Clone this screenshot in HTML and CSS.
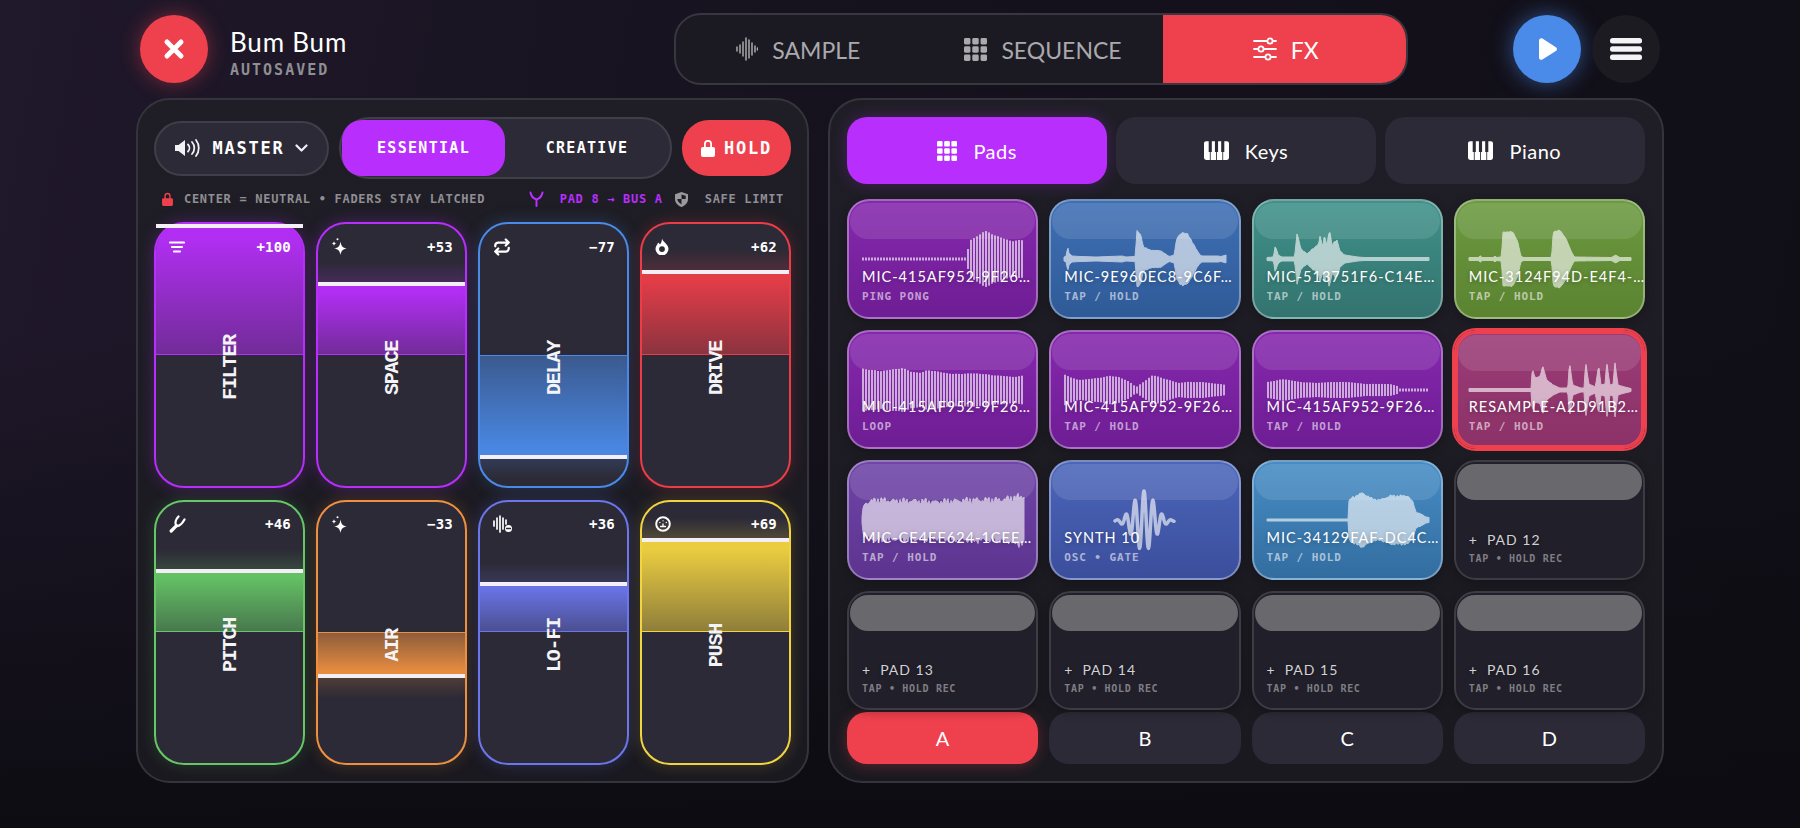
FILE: index.html
```html
<!DOCTYPE html>
<html lang="en">
<head>
  <meta charset="UTF-8">
  <title>Bum Bum - FX</title>
  <link rel="stylesheet" href="styles.css">
</head>
<body>
  <svg class="defs" width="0" height="0" aria-hidden="true">
    <symbol id="i-grid" viewBox="0 0 20 20">
      <rect x="0" y="0" width="5.6" height="5.6" rx="1.2"/><rect x="7.2" y="0" width="5.6" height="5.6" rx="1.2"/><rect x="14.4" y="0" width="5.6" height="5.6" rx="1.2"/>
      <rect x="0" y="7.2" width="5.6" height="5.6" rx="1.2"/><rect x="7.2" y="7.2" width="5.6" height="5.6" rx="1.2"/><rect x="14.4" y="7.2" width="5.6" height="5.6" rx="1.2"/>
      <rect x="0" y="14.4" width="5.6" height="5.6" rx="1.2"/><rect x="7.2" y="14.4" width="5.6" height="5.6" rx="1.2"/><rect x="14.4" y="14.4" width="5.6" height="5.6" rx="1.2"/>
    </symbol>
    <symbol id="i-keys" viewBox="0 0 24 18">
      <path fill-rule="evenodd" d="M2 0h20a2 2 0 0 1 2 2v14a2 2 0 0 1-2 2H2a2 2 0 0 1-2-2V2a2 2 0 0 1 2-2ZM4.5 0v10.500h3V0Zm6 0v10.500h3V0Zm6 0v10.500h3V0ZM5.600 10.500V18h.8v-7.500Zm6 0V18h.8v-7.500Zm6 0V18h.8v-7.500Z"/>
    </symbol>
    <symbol id="i-spark" viewBox="0 0 16 17">
      <path d="M9.500 3.500C10.200 8 11.500 9.800 16 10.500 11.500 11.200 10.200 13 9.500 17 8.800 13 7.500 11.200 3 10.500 7.500 9.800 8.800 8 9.500 3.500Z"/>
      <path d="M3 3c.2 1.700.8 2.300 2.500 2.500C3.800 5.700 3.200 6.300 3 8c-.2-1.700-.8-2.300-2.500-2.500C2.200 5.300 2.800 4.700 3 3Z"/>
      <circle cx="6.500" cy="1.200" r="1"/>
    </symbol>
    <symbol id="i-lock" viewBox="0 0 14 18">
      <path d="M3 8V5a4 4 0 0 1 8 0v3h1.200A1.800 1.800 0 0 1 14 9.800v6.400a1.800 1.800 0 0 1-1.800 1.800H1.800A1.800 1.800 0 0 1 0 16.200V9.800A1.800 1.800 0 0 1 1.800 8Zm1.800 0h4.400V5a2.200 2.200 0 0 0-4.400 0Z"/>
    </symbol>
  </svg>

  <div class="app">
    <header class="topbar">
      <div class="brand">
        <button class="round close">
          <svg width="22" height="22" viewBox="0 0 22 22"><path d="M4 4l14 14M18 4L4 18" fill="none" stroke="#fff" stroke-width="5" stroke-linecap="round"/></svg>
        </button>
        <div class="brand-text">
          <div class="song">Bum Bum</div>
          <div class="saved">AUTOSAVED</div>
        </div>
      </div>

      <nav class="nav">
        <a class="nav-tab">
          <svg width="22" height="24" viewBox="0 0 22 24" fill="none" stroke="currentColor" stroke-width="1.500" stroke-linecap="round"><path d="M1 10v4M4 8v8M7 5v14M10 1v22M13 3v18M16 6v12M19 9v6M21.500 11v2"/></svg>
          <span>SAMPLE</span>
        </a>
        <a class="nav-tab">
          <svg class="fill-current" width="23" height="23"><use href="#i-grid"/></svg>
          <span>SEQUENCE</span>
        </a>
        <a class="nav-tab active">
          <svg width="24" height="24" viewBox="0 0 24 24" fill="none" stroke="#fff" stroke-width="1.800" stroke-linecap="round"><path d="M1 4h13M20 4h3M1 12h4M11 12h12M1 20h11M18 20h5"/><circle cx="17" cy="4" r="2.600"/><circle cx="8" cy="12" r="2.600"/><circle cx="15" cy="20" r="2.600"/></svg>
          <span>FX</span>
        </a>
      </nav>

      <div class="actions">
        <button class="round play">
          <svg width="24" height="26" viewBox="0 0 24 26"><path d="M4 4.500c0-1.800 1.900-2.900 3.400-2l13.500 8.700c1.400.9 1.400 2.900 0 3.700L7.400 23.500c-1.500.9-3.400-.2-3.400-2Z" fill="#fff"/></svg>
        </button>
        <button class="round menu">
          <svg width="32" height="22" viewBox="0 0 32 22" fill="#f4f3f6"><rect width="32" height="5.600" rx="2.500"/><rect y="8.200" width="32" height="5.600" rx="2.500"/><rect y="16.400" width="32" height="5.600" rx="2.500"/></svg>
        </button>
      </div>
    </header>

    <main class="panels">
      <section class="panel left">
        <div class="controls">
          <button class="master">
            <svg width="27" height="18" viewBox="0 0 27 18"><path d="M0 6h3.500L10 1v16l-6.500-5H0Z" fill="#f1f0f4"/><path d="M13 5.500a5 5 0 0 1 0 7M17 3a9 9 0 0 1 0 12M21 1a13 13 0 0 1 0 16" fill="none" stroke="#f1f0f4" stroke-width="1.800" stroke-linecap="round"/></svg>
            MASTER
            <svg width="13" height="8" viewBox="0 0 13 8"><path d="M1.500 1.500l5 5 5-5" fill="none" stroke="#f1f0f4" stroke-width="2.200" stroke-linecap="round" stroke-linejoin="round"/></svg>
          </button>
          <div class="mode">
            <button class="mode-btn active">ESSENTIAL</button>
            <button class="mode-btn">CREATIVE</button>
          </div>
          <button class="hold">
            <svg class="fill-white" width="14" height="18"><use href="#i-lock"/></svg>
            HOLD
          </button>
        </div>

        <div class="hints">
          <span class="hint">
            <svg class="fill-red" width="11" height="14"><use href="#i-lock"/></svg>
            CENTER = NEUTRAL • FADERS STAY LATCHED
          </span>
          <span class="hint-right">
            <span class="hint route">
              <svg width="15" height="16" viewBox="0 0 15 16" fill="none" stroke="#b82efc" stroke-width="2" stroke-linecap="round" stroke-linejoin="round"><path d="M1.500 1.500C2 5 4.500 7.500 7.500 8.500 10.500 7.500 13 5 13.500 1.500M7.500 8.500V15"/></svg>
              PAD 8 → BUS A
            </span>
            <span class="hint limit">
              <svg width="13" height="15" viewBox="0 0 13 15"><path fill-rule="evenodd" d="M6.500 0L13 2.200V7c0 3.800-2.800 6.600-6.500 8C2.800 13.600 0 10.800 0 7V2.200ZM6.500 2.500V7H2.300c.2 2.300 2 4.100 4.200 5.200V7h4.200V3.800Z" fill="#9a999e"/></svg>
              SAFE LIMIT
            </span>
          </span>
        </div>

        <div class="faders">
          <div class="fader purple" style="--v:100">
            <div class="track"><div class="fill"></div></div>
            <div class="handle"></div>
            <div class="fader-top">
              <svg width="16" height="12" viewBox="0 0 16 12" fill="none" stroke="#fff" stroke-width="2.200" stroke-linecap="round"><path d="M1 1.500h14M3 6h10M5 10.500h6"/></svg>
              <span class="value">+100</span>
            </div>
            <span class="fader-name">FILTER</span>
          </div>
          <div class="fader purple" style="--v:53">
            <div class="track"><div class="fill"></div></div>
            <div class="handle"></div>
            <div class="fader-top">
              <svg class="fill-white" width="16" height="17"><use href="#i-spark"/></svg>
              <span class="value">+53</span>
            </div>
            <span class="fader-name">SPACE</span>
          </div>
          <div class="fader blue neg" style="--v:-77">
            <div class="track"><div class="fill"></div></div>
            <div class="handle"></div>
            <div class="fader-top">
              <svg width="18" height="18" viewBox="0 0 24 24" fill="none" stroke="#fff" stroke-width="3" stroke-linecap="round" stroke-linejoin="round"><path d="M17 2l4 4-4 4M3 11v-1a4 4 0 0 1 4-4h14M7 22l-4-4 4-4M21 13v1a4 4 0 0 1-4 4H3"/></svg>
              <span class="value">−77</span>
            </div>
            <span class="fader-name">DELAY</span>
          </div>
          <div class="fader red" style="--v:62">
            <div class="track"><div class="fill"></div></div>
            <div class="handle"></div>
            <div class="fader-top">
              <svg width="14" height="17" viewBox="0 0 14 17"><path fill-rule="evenodd" d="M7 .5c.8 3.500 6.500 5.500 6.500 10.500a6.300 6.300 0 0 1-13 0c0-3 2-4 2.500-6.500C4.300 5.300 5 6.500 5 6.500 6.200 5 7 3 7 .5ZM7 8.200a2.900 2.900 0 1 0 0 5.800 2.900 2.900 0 0 0 0-5.800Z" fill="#fff"/></svg>
              <span class="value">+62</span>
            </div>
            <span class="fader-name">DRIVE</span>
          </div>
          <div class="fader green" style="--v:46">
            <div class="track"><div class="fill"></div></div>
            <div class="handle"></div>
            <div class="fader-top">
              <svg width="17" height="18" viewBox="0 0 17 18" fill="none" stroke="#fff" stroke-linecap="round"><path d="M2.200 16l5.300-5.300" stroke-width="3.200"/><path d="M7.500 11C5.500 8 7 4 9.500 1.500M7.500 11c3 .5 6-3 8-6.500" stroke-width="2.300"/></svg>
              <span class="value">+46</span>
            </div>
            <span class="fader-name">PITCH</span>
          </div>
          <div class="fader orange neg" style="--v:-33">
            <div class="track"><div class="fill"></div></div>
            <div class="handle"></div>
            <div class="fader-top">
              <svg class="fill-white" width="16" height="17"><use href="#i-spark"/></svg>
              <span class="value">−33</span>
            </div>
            <span class="fader-name">AIR</span>
          </div>
          <div class="fader indigo" style="--v:36">
            <div class="track"><div class="fill"></div></div>
            <div class="handle"></div>
            <div class="fader-top">
              <svg width="20" height="18" viewBox="0 0 20 18" fill="none" stroke="#fff" stroke-width="1.700" stroke-linecap="round"><path d="M1 6v5M4 3v11M7 1v16M10 3v11M13 5v4"/><circle cx="15.500" cy="13.500" r="3.500" fill="#fff" stroke="none"/><path d="M13.500 13.500h4" stroke="#2c2a36" stroke-width="1.300"/></svg>
              <span class="value">+36</span>
            </div>
            <span class="fader-name">LO-FI</span>
          </div>
          <div class="fader yellow" style="--v:69">
            <div class="track"><div class="fill"></div></div>
            <div class="handle"></div>
            <div class="fader-top">
              <svg width="16" height="16" viewBox="0 0 16 16" fill="none" stroke="#fff"><circle cx="8" cy="8" r="6.800" stroke-width="2"/><path d="M4.800 6.500h.1M8 4.800h.1M11.200 6.500h.1M8 10.500V8M5.500 10.500h5" stroke-width="1.300" stroke-linecap="round"/></svg>
              <span class="value">+69</span>
            </div>
            <span class="fader-name">PUSH</span>
          </div>
        </div>
      </section>

      <section class="panel right">
        <div class="tabs">
          <button class="tab active"><svg class="fill-white" width="20" height="20"><use href="#i-grid"/></svg>Pads</button>
          <button class="tab"><svg class="fill-white" width="25" height="19"><use href="#i-keys"/></svg>Keys</button>
          <button class="tab"><svg class="fill-white" width="25" height="19"><use href="#i-keys"/></svg>Piano</button>
        </div>

        <div class="pads">
          <div class="pad p-purple">
            <svg class="wave" data-kind="bars" data-env="0:1.500 .63:1.500 .645:6 .655:18 .7:22 .75:28 .8:25 .86:21 .92:18 1:19"></svg>
            <div class="pad-name">MIC-415AF952-9F26…</div>
            <div class="pad-sub">PING PONG</div>
          </div>
          <div class="pad p-blue">
            <svg class="wave" data-kind="solid" data-env="0:2 .015:3 .022:13 .03:6 .05:3 .1:2.500 .2:2 .36:3 .38:2 .44:2.500 .45:28 .475:24 .49:12 .53:9 .6:8 .635:4 .65:2.500 .68:4 .695:20 .73:27 .76:25 .8:15 .83:6 .85:3 .95:3 .97:2.500 1:4" data-jitter=".06"></svg>
            <div class="pad-name">MIC-9E960EC8-9C6F…</div>
            <div class="pad-sub">TAP / HOLD</div>
          </div>
          <div class="pad p-teal">
            <svg class="wave" data-kind="solid" data-env="0:1.500 .04:2 .05:13 .07:4 .09:2 .17:2 .185:25 .21:10 .25:5 .28:10 .32:15 .325:23 .345:13 .355:25 .37:14 .385:29 .4:14 .43:20 .45:8 .48:4 .52:3 .56:2 .6:1.500 1:1.500" data-jitter=".1"></svg>
            <div class="pad-name">MIC-513751F6-C14E…</div>
            <div class="pad-sub">TAP / HOLD</div>
          </div>
          <div class="pad p-green">
            <svg class="wave" data-kind="solid" data-env="0:1.500 .06:1.500 .07:3.500 .08:1.500 .15:1.500 .16:3 .17:1.500 .2:2 .21:27 .27:27 .3:18 .32:3 .335:1.500 .51:1.500 .52:27 .56:29 .6:20 .63:8 .65:2 .88:1.500 .905:4 .93:1.500 1:1.500" data-jitter=".02"></svg>
            <div class="pad-name">MIC-3124F94D-E4F4-…</div>
            <div class="pad-sub">TAP / HOLD</div>
          </div>

          <div class="pad p-purple">
            <svg class="wave" data-kind="bars" data-env="0:21 .1:19 .2:21 .24:22 .3:18 .36:17 .4:20 .48:18 .56:16 .7:16.500 .8:15 .95:13 1:15"></svg>
            <div class="pad-name">MIC-415AF952-9F26…</div>
            <div class="pad-sub">LOOP</div>
          </div>
          <div class="pad p-purple">
            <svg class="wave" data-kind="bars" data-env="0:15 .08:10 .2:12 .28:14 .33:13 .4:8 .44:3 .5:10 .54:15 .6:12 .7:7 .75:8 .85:8 1:5"></svg>
            <div class="pad-name">MIC-415AF952-9F26…</div>
            <div class="pad-sub">TAP / HOLD</div>
          </div>
          <div class="pad p-purple">
            <svg class="wave" data-kind="bars" data-env="0:8 .1:11 .2:8 .3:7 .4:8 .5:8 .6:6 .75:6 .8:4 .81:1.500 1:1.500"></svg>
            <div class="pad-name">MIC-415AF952-9F26…</div>
            <div class="pad-sub">TAP / HOLD</div>
          </div>
          <div class="pad p-rose selected">
            <svg class="wave" data-kind="solid" data-env="0:1.500 .385:1.500 .39:21 .41:12 .44:14 .455:24 .48:10 .52:5 .56:2 .61:2 .62:28 .64:5 .69:2 .71:2 .72:28 .74:6 .78:3 .8:25 .815:5 .84:6 .85:28 .87:5 .89:6 .9:28 .92:5 .96:3 1:1.500" data-jitter=".03"></svg>
            <div class="pad-name">RESAMPLE-A2D91B2…</div>
            <div class="pad-sub">TAP / HOLD</div>
          </div>

          <div class="pad p-violet">
            <svg class="wave" data-kind="solid" data-env="0:3 .01:15 .05:19 .1:20 .2:19 .35:19 .45:18 .55:19 .7:20 .85:20 .97:23 1:24" data-jitter=".22"></svg>
            <div class="pad-name">MIC-CE4EE624-1CEE…</div>
            <div class="pad-sub">TAP / HOLD</div>
          </div>
          <div class="pad p-indigo">
            <svg class="wave" data-kind="sine"></svg>
            <div class="pad-name">SYNTH 10</div>
            <div class="pad-sub">OSC • GATE</div>
          </div>
          <div class="pad p-sky">
            <svg class="wave" data-kind="solid" data-env="0:1 .5:1 .505:18 .52:22 .59:27 .65:21 .7:20 .76:24 .87:24 .9:18 .92:8 .95:6 .98:3 1:2.500" data-jitter=".07"></svg>
            <div class="pad-name">MIC-34129FAF-DC4C…</div>
            <div class="pad-sub">TAP / HOLD</div>
          </div>
          <div class="pad empty">
            <div class="pad-name"><span class="plus">+</span>PAD 12</div>
            <div class="pad-sub">TAP • HOLD REC</div>
          </div>

          <div class="pad empty">
            <div class="pad-name"><span class="plus">+</span>PAD 13</div>
            <div class="pad-sub">TAP • HOLD REC</div>
          </div>
          <div class="pad empty">
            <div class="pad-name"><span class="plus">+</span>PAD 14</div>
            <div class="pad-sub">TAP • HOLD REC</div>
          </div>
          <div class="pad empty">
            <div class="pad-name"><span class="plus">+</span>PAD 15</div>
            <div class="pad-sub">TAP • HOLD REC</div>
          </div>
          <div class="pad empty">
            <div class="pad-name"><span class="plus">+</span>PAD 16</div>
            <div class="pad-sub">TAP • HOLD REC</div>
          </div>
        </div>

        <div class="banks">
          <button class="bank active">A</button>
          <button class="bank">B</button>
          <button class="bank">C</button>
          <button class="bank">D</button>
        </div>
      </section>
    </main>
  </div>

  <script src="script.js"></script>
</body>
</html>
```

FILE: styles.css
```css
* {
  box-sizing: border-box;
}

body {
  margin: 0;
  height: 828px;
  overflow: hidden;
  font-family: 'Lato', sans-serif;
  color: #fff;
  background:
    linear-gradient(to bottom, rgba(13,12,18,0) 40%, #0d0c12 100%),
    linear-gradient(100deg, #20182b 0%, #15121d 45%, #100e17 100%);
}

button {
  border: none;
  color: inherit;
  font: inherit;
  padding: 0;
}

.defs {
  position: absolute;
}

.fill-current {
  fill: currentColor;
}

.fill-white {
  fill: #fff;
}

.fill-red {
  fill: #ee414d;
}

.app {
  width: 1528px;
  margin: 0 auto;
  padding-top: 13px;
}

/* top bar */
.topbar {
  display: grid;
  grid-template-columns: 534px 734px 1fr;
  align-items: center;
  height: 72px;
  padding: 0 4px;
}

.brand {
  display: flex;
  align-items: center;
  gap: 22px;
}

.brand-text {
  padding-top: 7px;
}

.round {
  width: 68px;
  height: 68px;
  border-radius: 50%;
  display: flex;
  align-items: center;
  justify-content: center;
  flex: none;
}

.close {
  background: #ee414d;
  box-shadow: 0 0 20px rgba(238,65,77,0.45);
}

.song {
  font-size: 26px;
  line-height: 34px;
  letter-spacing: 0.800px;
}

.saved {
  margin-top: 1px;
  font-family: 'DejaVu Sans Mono', monospace;
  font-weight: bold;
  font-size: 15px;
  line-height: 20px;
  letter-spacing: 2px;
  color: #8f8e93;
}

.nav {
  display: flex;
  height: 72px;
  background: #1b1a22;
  border: 2px solid #38363f;
  border-radius: 27px;
  overflow: hidden;
}

.nav-tab {
  flex: 1;
  display: flex;
  align-items: center;
  justify-content: center;
  gap: 14px;
  font-size: 23px;
  color: #aaa9ad;
}

.nav-tab span {
  padding-top: 2px;
}

.nav-tab.active {
  background: #ee414d;
  color: #fff;
  margin: -2px;
}

.actions {
  display: flex;
  justify-content: flex-end;
  gap: 11px;
}

.play {
  background: #4a8ae8;
  box-shadow: 0 0 22px rgba(74,138,232,0.55);
}

.menu {
  background: #1c1b22;
}

/* panels */
.panels {
  display: grid;
  grid-template-columns: 673px 836px;
  gap: 19px;
  margin-top: 13px;
}

.panel {
  height: 685px;
  background: linear-gradient(to bottom, #1f1e26, #1a1920);
  border: 2px solid #35333b;
  border-radius: 34px;
}

.left {
  padding: 17px 16px 0;
}

.controls {
  display: flex;
  align-items: center;
  gap: 10px;
  height: 62px;
}

.master {
  width: 175px;
  height: 55px;
  display: flex;
  align-items: center;
  justify-content: center;
  gap: 10px;
  background: #2c2a36;
  border: 2px solid #403e48;
  border-radius: 28px;
  font-family: 'DejaVu Sans Mono', monospace;
  font-weight: bold;
  font-size: 17px;
  letter-spacing: 1.800px;
}

.mode {
  width: 333px;
  height: 62px;
  display: flex;
  padding: 1px;
  background: #2c2a36;
  border: 2px solid #403e48;
  border-radius: 31px;
}

.mode-btn {
  flex: 1;
  background: none;
  font-family: 'DejaVu Sans Mono', monospace;
  font-weight: bold;
  font-size: 15px;
  letter-spacing: 1.300px;
  border-radius: 20px;
}

.mode-btn.active {
  flex: none;
  width: 163px;
  background: #b82efc;
}

.hold {
  width: 109px;
  height: 56px;
  display: flex;
  align-items: center;
  justify-content: center;
  gap: 9px;
  background: #ee414d;
  border-radius: 27px;
  font-family: 'DejaVu Sans Mono', monospace;
  font-weight: bold;
  font-size: 17px;
  letter-spacing: 1.800px;
}

.hints {
  display: flex;
  justify-content: space-between;
  height: 22px;
  margin: 9px 0 12px;
  padding: 0 7px 0 8px;
  font-family: 'DejaVu Sans Mono', monospace;
  font-weight: bold;
  font-size: 12px;
  letter-spacing: 0.700px;
  color: #8f8e93;
}

.hint, .hint-right {
  display: flex;
  align-items: center;
  white-space: nowrap;
}

.hint {
  gap: 11px;
}

.hint-right {
  gap: 12px;
}

.route {
  gap: 16px;
  color: #b82efc;
}

.limit {
  gap: 17px;
}

/* faders */
.faders {
  display: grid;
  grid-template-columns: repeat(4, 1fr);
  grid-template-rows: repeat(2, 265.500px);
  gap: 12px 11px;
}

.fader {
  position: relative;
  display: flex;
  align-items: center;
  justify-content: center;
  background: #2c2a36;
  border: 2.500px solid var(--c);
  border-radius: 30px;
  box-shadow: 0 0 16px var(--glow);
}

.purple { --c: #b82efc; --glow: rgba(184,46,252,0.28); }
.blue { --c: #4a8ae8; --glow: rgba(74,138,232,0.25); }
.red { --c: #ea3d48; --glow: rgba(234,61,72,0.25); }
.green { --c: #66c766; --glow: rgba(102,199,102,0.2); }
.orange { --c: #ef9040; --glow: rgba(239,144,64,0.22); }
.indigo { --c: #6b76ec; --glow: rgba(107,118,236,0.25); }
.yellow { --c: #f2d340; --glow: rgba(242,211,64,0.2); }

.track {
  position: absolute;
  inset: 0;
  border-radius: 27px;
  overflow: hidden;
}

.fill {
  position: absolute;
  left: 0;
  right: 0;
  bottom: 50%;
  height: calc(var(--v) * 1.330px);
  background: linear-gradient(to top, rgba(44,42,54,0.5), rgba(44,42,54,0.04) 90%), var(--c);
  border-bottom: 1px solid var(--c);
}

.fill::before {
  content: "";
  position: absolute;
  left: 0;
  right: 0;
  bottom: 100%;
  height: 22px;
  background: linear-gradient(to top, var(--c), transparent);
  opacity: 0.2;
}

.neg .fill {
  top: 50%;
  bottom: auto;
  height: calc(var(--v) * -1.330px);
  background: linear-gradient(to bottom, rgba(44,42,54,0.5), rgba(44,42,54,0.04) 90%), var(--c);
  border-bottom: none;
  border-top: 1px solid var(--c);
}

.neg .fill::before {
  bottom: auto;
  top: 100%;
  background: linear-gradient(to bottom, var(--c), transparent);
}

.handle {
  position: absolute;
  left: 0;
  right: 0;
  top: max(2px, calc(50% - var(--v) * 1.330px));
  height: 4px;
  margin-top: -2px;
  background: #f4eff6;
}

.fader-top {
  position: absolute;
  top: 13px;
  left: 13px;
  right: 12px;
  height: 19px;
  display: flex;
  align-items: center;
  justify-content: space-between;
}

.value {
  font-family: 'DejaVu Sans Mono', monospace;
  font-weight: bold;
  font-size: 14px;
  letter-spacing: 0.200px;
}

.fader-name {
  position: relative;
  left: 1px;
  writing-mode: vertical-rl;
  transform: rotate(180deg);
  margin-top: 26px;
  font-family: 'Liberation Mono', monospace;
  font-weight: bold;
  font-size: 20px;
  line-height: 20px;
  letter-spacing: -1.200px;
  color: #f4f3f6;
}

/* pads */
.right {
  padding: 17px 17px 0;
}

.tabs {
  display: grid;
  grid-template-columns: repeat(3, minmax(0, 1fr));
  gap: 8.500px;
  height: 67px;
}

.tab {
  display: flex;
  align-items: center;
  justify-content: center;
  gap: 16px;
  background: #2c2a36;
  border-radius: 20px;
  font-size: 20px;
  letter-spacing: 0.500px;
}

.tab.active {
  background: #b82efc;
  box-shadow: 0 0 16px rgba(184,46,252,0.25);
}

.pads {
  display: grid;
  grid-template-columns: repeat(4, minmax(0, 1fr));
  grid-template-rows: repeat(4, 119.500px);
  gap: 11px;
  margin-top: 15px;
}

.pad {
  position: relative;
  display: flex;
  flex-direction: column;
  justify-content: flex-end;
  padding: 0 13px 13px;
  border: 2px solid rgba(255,255,255,0.34);
  border-radius: 22px;
  box-shadow: 0 3px 8px rgba(0,0,0,0.25);
}

.pad::before {
  content: "";
  position: absolute;
  top: 2px;
  left: 1px;
  right: 1px;
  height: 36px;
  border-radius: 18px;
  background: rgba(255,255,255,0.11);
}

.p-purple { background: linear-gradient(to bottom, #8628ae, #6e1d94); }
.p-blue { background: linear-gradient(to bottom, #3f70b5, #2f5a97); }
.p-teal { background: linear-gradient(to bottom, #40918a, #33736f); }
.p-green { background: linear-gradient(to bottom, #6c9a40, #5b8330); }
.p-rose { background: linear-gradient(to bottom, #9c3c77, #8b3268); }
.p-violet { background: linear-gradient(to bottom, #6f45a8, #5c348f); }
.p-indigo { background: linear-gradient(to bottom, #4c66ba, #3b4e9c); }
.p-sky { background: linear-gradient(to bottom, #468dc5, #336da0); }

.selected {
  border-color: #ee414d;
  box-shadow: 0 0 0 2px #ee414d, inset 0 0 0 2px #ee414d;
}

.selected::before {
  top: 3px;
  left: 2px;
  right: 2px;
}

.empty {
  background: #211f29;
  border-color: #3d3c44;
  padding-bottom: 12px;
}

.empty::before {
  background: #69686c;
}

.wave {
  position: absolute;
  top: 26px;
  left: 13px;
  width: 162px;
  height: 64px;
  overflow: visible;
  opacity: 0.62;
  fill: #fff;
  stroke: #fff;
}

.pad-name {
  position: relative;
  font-size: 14.500px;
  line-height: 18px;
  letter-spacing: 1px;
  white-space: nowrap;
  text-shadow: 0 1px 4px rgba(0,0,0,0.3);
}

.pad-sub {
  position: relative;
  margin-top: 4px;
  font-family: 'DejaVu Sans Mono', monospace;
  font-weight: bold;
  font-size: 11px;
  line-height: 14px;
  letter-spacing: 0.900px;
  color: rgba(255,255,255,0.58);
}

.empty .pad-name {
  margin-bottom: -1px;
  color: #d2d1d5;
  font-size: 14px;
}

.plus {
  margin-right: 9px;
}

.empty .pad-sub {
  font-size: 10px;
  letter-spacing: 0.700px;
  color: #7f7e84;
}

.banks {
  display: grid;
  grid-template-columns: repeat(4, minmax(0, 1fr));
  gap: 11px;
  height: 52px;
  margin-top: 2px;
}

.bank {
  background: #2c2a36;
  border-radius: 20px;
  font-size: 20px;
}

.bank.active {
  background: #ee414d;
  box-shadow: 0 2px 14px rgba(238,65,77,0.3);
}
```

FILE: script.js
```js
// draws the sample waveforms from the envelopes written on each svg
const NS = "http://www.w3.org/2000/svg";
const W = 162;
const MID = 32;

function parseEnv(text) {
  return text.split(" ").map(p => p.split(":").map(Number));
}

function ampAt(env, t) {
  for (let i = 1; i < env.length; i++) {
    if (t <= env[i][0]) {
      const [x0, a0] = env[i - 1];
      const [x1, a1] = env[i];
      return a0 + (a1 - a0) * (t - x0) / (x1 - x0);
    }
  }
  return env[env.length - 1][1];
}

function noise(x) {
  return (Math.sin(x * 1.7) + Math.sin(x * 0.61 + 1) + Math.sin(x * 4.3 + 2)) / 3;
}

function add(svg, tag, attrs) {
  const el = document.createElementNS(NS, tag);
  Object.keys(attrs).forEach(k => el.setAttribute(k, attrs[k]));
  svg.appendChild(el);
}

function drawBars(svg, env) {
  for (let x = 0; x < W; x += 3) {
    const a = ampAt(env, x / W) * (1 + noise(x) * 0.03);
    add(svg, "rect", { x, y: MID - a, width: 2, height: a * 2, stroke: "none" });
  }
}

function drawSolid(svg, env, jitter) {
  const top = [];
  const bottom = [];
  for (let x = 0; x <= W; x++) {
    const a = ampAt(env, x / W);
    const flat = a < 4 ? 0 : jitter;
    top.push(x + "," + (MID - a * (1 + noise(x) * flat)).toFixed(1));
    bottom.unshift(x + "," + (MID + a * (1 + noise(x + 40) * flat)).toFixed(1));
  }
  add(svg, "polygon", { points: top.concat(bottom).join(" "), "stroke-width": 1, "stroke-linejoin": "round" });
}

function drawSine(svg) {
  const pts = [];
  for (let x = 51; x <= 110; x += 0.5) {
    const d = x - 80;
    const a = 30 * Math.exp(-(d * d) / 220);
    pts.push(x + "," + (MID + 1 - a * Math.cos(2 * Math.PI * d / 9)).toFixed(1));
  }
  add(svg, "polyline", { points: pts.join(" "), fill: "none", "stroke-width": 3.5, "stroke-linecap": "round", "stroke-linejoin": "round" });
}

document.querySelectorAll(".wave").forEach(svg => {
  svg.setAttribute("viewBox", "0 0 " + W + " 64");
  const kind = svg.dataset.kind;
  if (kind === "sine") {
    drawSine(svg);
  } else if (kind === "bars") {
    drawBars(svg, parseEnv(svg.dataset.env));
  } else {
    drawSolid(svg, parseEnv(svg.dataset.env), Number(svg.dataset.jitter));
  }
});
```
